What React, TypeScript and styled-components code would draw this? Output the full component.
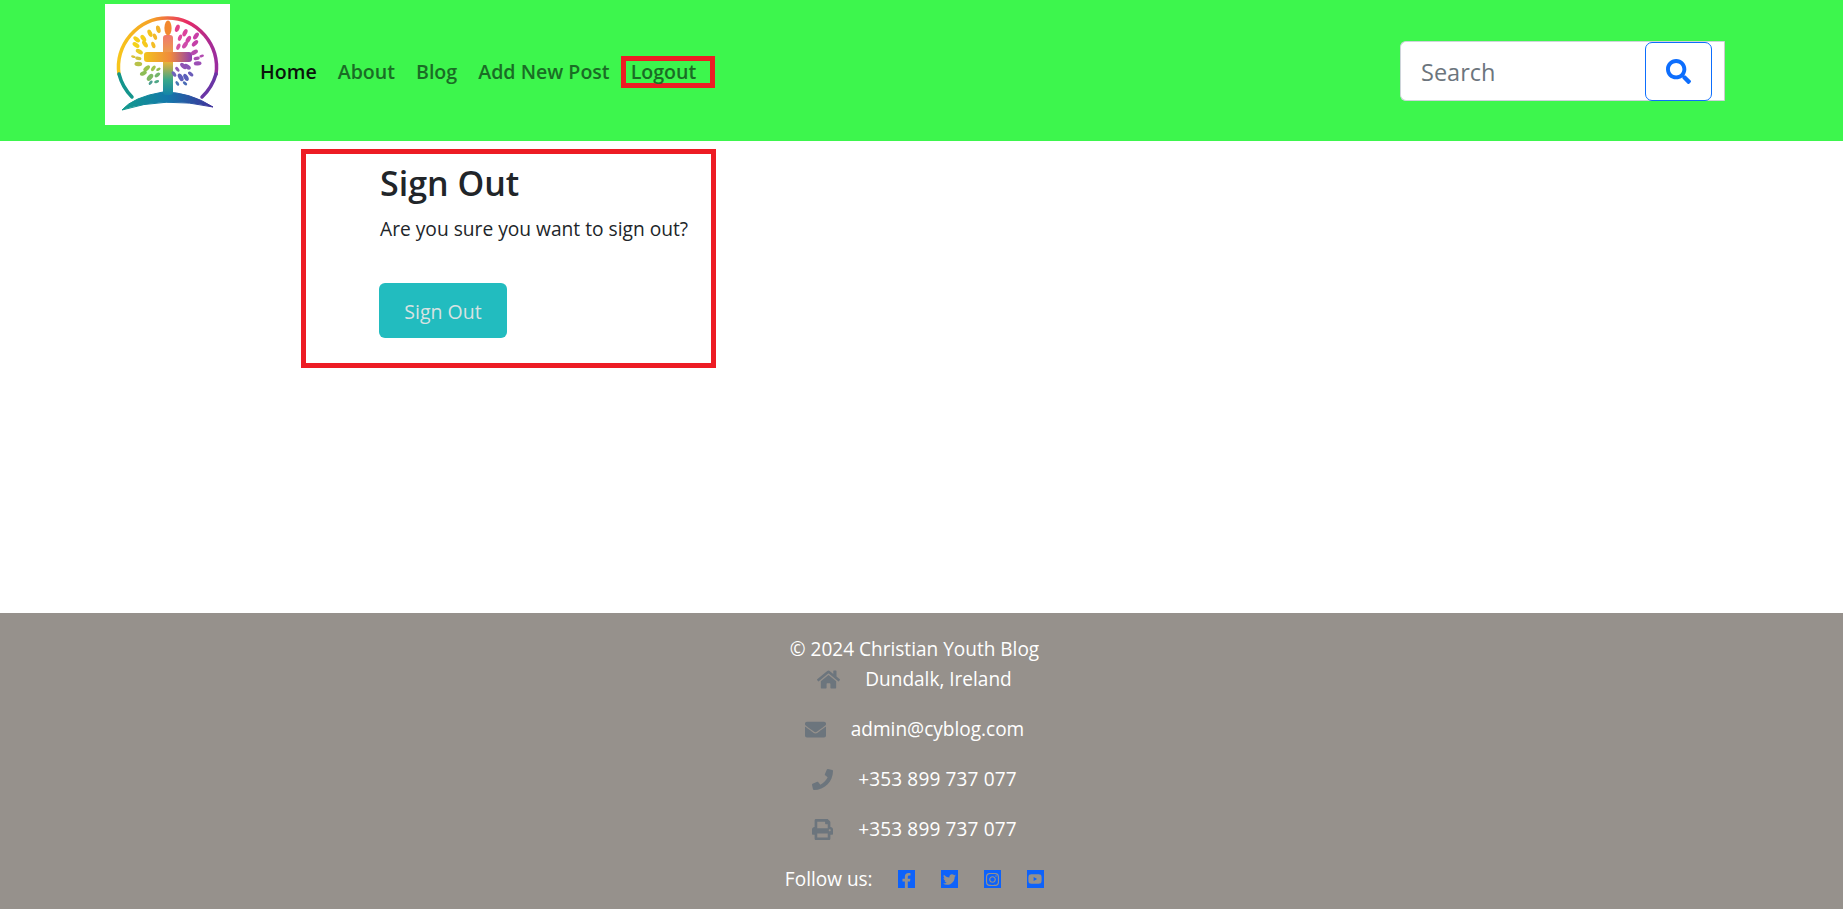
import React from "react";
import styled, { createGlobalStyle } from "styled-components";
import {
  FaHome,
  FaEnvelope,
  FaPhone,
  FaPrint,
  FaSearch,
  FaFacebookF,
  FaTwitter,
  FaInstagram,
  FaYoutube,
} from "react-icons/fa";

const Global = createGlobalStyle`
  html, body { margin: 0; padding: 0; background: #fff; }
  body { font-family: "Open Sans", "Noto Sans", sans-serif; color: #212529; font-size: 19.05px; line-height: 30px; }
  * { box-sizing: border-box; }
`;

const Page = styled.div`
  display: flex;
  flex-direction: column;
  height: 909px;
  overflow: hidden;
`;

const Header = styled.header`
  height: 141px;
  flex: none;
  background: #3df64d;
  display: flex;
  align-items: flex-start;
  padding: 0 118px 0 105px;
`;

const LogoBox = styled.a`
  width: 125px;
  height: 121px;
  background: #fff;
  display: block;
  flex: none;
  margin: 4px 30px 0 0;
`;

const Nav = styled.nav`
  display: flex;
  align-items: center;
  height: 144px;
`;

const NavLink = styled.a<{ $active?: boolean; $boxed?: boolean }>`
  font-size: 19.6px;
  font-weight: 600;
  line-height: 26px;
  color: ${(p) => (p.$active ? "#0a130b" : "#1a6d25")};
  margin-right: ${(p) => (p.$boxed ? "0" : "21px")};
  ${(p) => p.$boxed && "border: 5px solid #ed1c24; padding: 0 14px 0 5px; margin-left: -10px; height: 32px; line-height: 22px;"}
`;

const SearchForm = styled.form`
  margin: 41px 0 0 auto;
  width: 325px;
  height: 60px;
  background: #fff;
  border: 1px solid #ced4da;
  border-right: 1px solid #ccc;
  border-radius: 6px 0 0 6px;
  display: flex;
  align-items: center;
  padding-left: 20px;
`;

const SearchText = styled.span`
  color: #6c757d;
  font-size: 23.5px;
  flex: 1;
  padding-top: 2px;
`;

const SearchButton = styled.button`
  width: 67px;
  height: 59px;
  margin-right: 12px;
  background: #fff;
  border: 1px solid #0d6efd;
  border-radius: 7px;
  display: flex;
  align-items: center;
  justify-content: center;
  color: #0d6efd;
  font-size: 25px;
  padding: 0;
`;

const Main = styled.main`
  flex: 1;
  padding: 8px 0 0 301px;
`;

const NoticeBox = styled.section`
  width: 415px;
  height: 219px;
  border: 5px solid #ed1c24;
  padding: 7px 0 0 74px;
`;

const Title = styled.h1`
  margin: 0;
  font-size: 34px;
  line-height: 44px;
  font-weight: 600;
  color: #212529;
`;

const Message = styled.p`
  margin: 9px 0 0;
  white-space: nowrap;
  font-size: 19.2px;
`;

const SignOutButton = styled.button`
  margin: 39px 0 0 -1px;
  width: 128px;
  height: 55px;
  background: #22bcbf;
  border: none;
  border-radius: 6px;
  color: #d8e2e2;
  font: inherit;
  font-size: 19.5px;
  padding: 2px 0 0;
`;

const Footer = styled.footer`
  height: 296px;
  flex: none;
  background: #96918c;
  color: #fff;
  padding: 21px 14px 0 0;
  display: flex;
  flex-direction: column;
  align-items: center;
  text-align: center;
`;

const Copy = styled.div``;

const ContactRow = styled.div`
  display: flex;
  align-items: center;
  justify-content: center;
  gap: 25px;
  height: 30px;
  margin-bottom: 20px;
`;

const ContactText = styled.span<{ $numeric?: boolean }>`
  letter-spacing: ${(p) => (p.$numeric ? "0.15px" : "0")};
`;

const ContactIcon = styled.span<{ $wide?: boolean }>`
  color: #6c757d;
  display: flex;
  justify-content: center;
  width: ${(p) => (p.$wide ? "23px" : "21px")};
  svg {
    width: ${(p) => (p.$wide ? "23px" : "21px")};
    height: 21px;
  }
`;

const FollowRow = styled.div`
  display: flex;
  align-items: center;
  height: 30px;
  gap: 25px;
`;

const SocialList = styled.div`
  display: flex;
  gap: 25.5px;
`;

const SocialSquare = styled.a<{ $bottom?: boolean; $size: number }>`
  width: 17.5px;
  height: 17.5px;
  background: #0d62fb;
  color: #96918c;
  display: flex;
  justify-content: center;
  align-items: ${(p) => (p.$bottom ? "flex-end" : "center")};
  font-size: ${(p) => p.$size}px;
`;

const LEAVES: [number, number, number, number, string][] = [
  [175, 88, 3, -15, "#f1b32a"], [150, 100, 3, -25, "#f4c21f"], [165, 110, 2.6, -20, "#f2b92b"],
  [130, 115, 3, -35, "#f5cf1c"], [110, 118, 3, -50, "#f5cf1c"], [108, 135, 3, -55, "#f4d21b"],
  [135, 132, 3, -35, "#f6c91e"], [160, 135, 2.6, -20, "#f3bd26"], [118, 155, 3, -60, "#e8cc2a"],
  [100, 170, 1.8, -75, "#d9c23c"], [115, 175, 2.4, -80, "#cfc33f"], [115, 192, 3, -85, "#b8c148"],
  [232, 85, 3, 20, "#e4408a"], [255, 98, 3, 25, "#dc3f9c"], [240, 113, 2.6, 20, "#e04a9e"],
  [288, 108, 3, 35, "#c93ea6"], [265, 118, 3, 30, "#d242a6"], [285, 130, 3, 45, "#c43fa8"],
  [255, 135, 3, 35, "#cf4bab"], [235, 140, 2.6, 20, "#d651a6"], [283, 157, 3, 60, "#b64aad"],
  [305, 168, 1.8, 75, "#b24bb0"], [290, 175, 2.4, 80, "#a94cb2"], [293, 190, 3, 85, "#9c4fb5"],
  [140, 205, 3, 50, "#9cc24d"], [160, 205, 2.4, 35, "#a3c44e"], [175, 208, 1.8, 60, "#94be56"],
  [130, 220, 2.8, 65, "#8dbd55"], [150, 232, 3.2, 40, "#7fb862"], [172, 225, 2.4, 55, "#74b46c"],
  [170, 245, 2, 70, "#4fa886"], [152, 248, 2, 40, "#4d9e93"],
  [250, 198, 3, -45, "#8f53b5"], [232, 208, 2.2, -40, "#8f5ab8"], [262, 200, 3, -55, "#8a55b7"],
  [242, 232, 3.2, -30, "#5e60bb"], [258, 232, 3, -30, "#5a5fba"], [222, 222, 2.4, -35, "#6e64bb"],
  [272, 222, 2.4, -50, "#6a5cb9"], [232, 250, 2, -35, "#4a77b6"], [255, 250, 2, -50, "#4a6cb6"],
];

const Logo = () => (
  <svg viewBox="0 0 125 121" width="125" height="121" role="img" aria-label="Christian Youth Blog logo">
    <defs>
      <linearGradient id="ring" x1="0" x2="1" y1="0.3" y2="0.3">
        <stop offset="0" stopColor="#f7c51c" />
        <stop offset="0.35" stopColor="#f59f27" />
        <stop offset="0.7" stopColor="#e82a66" />
        <stop offset="1" stopColor="#9a2c9e" />
      </linearGradient>
      <linearGradient id="hill" x1="0" x2="1" y1="0" y2="0">
        <stop offset="0" stopColor="#139a8b" />
        <stop offset="0.5" stopColor="#1378ab" />
        <stop offset="1" stopColor="#40309a" />
      </linearGradient>
      <linearGradient id="stem" x1="0" x2="0" y1="0" y2="1">
        <stop offset="0" stopColor="#f0786e" />
        <stop offset="0.45" stopColor="#e9b23a" />
        <stop offset="0.75" stopColor="#3aa78a" />
        <stop offset="1" stopColor="#1284a8" />
      </linearGradient>
      <linearGradient id="bar" x1="0" x2="1" y1="0" y2="0">
        <stop offset="0" stopColor="#f2c31e" />
        <stop offset="0.55" stopColor="#f08a3c" />
        <stop offset="1" stopColor="#8f3fb0" />
      </linearGradient>
    </defs>
    <path d="M14 71 A 49 50 0 1 1 111 71" fill="none" stroke="url(#ring)" strokeWidth="3.5" />
    <path d="M14 70 A 49 50 0 0 0 27 93" fill="none" stroke="#14958c" strokeWidth="3.5" strokeLinecap="round" />
    <path d="M111 70 A 49 50 0 0 1 97 93" fill="none" stroke="#6a35a5" strokeWidth="3.5" strokeLinecap="round" />
    <path d="M17 106 Q 28 93 58 88 Q 85 88 108 103 Q 60 92 17 106 Z" fill="url(#hill)" stroke="url(#hill)" strokeWidth="1" strokeLinejoin="round" />
    <rect x="58" y="31" width="10" height="60" rx="3" fill="url(#stem)" />
    <rect x="39" y="48" width="48" height="10" rx="3" fill="url(#bar)" />
    <ellipse cx="63" cy="24" rx="3.6" ry="7.5" fill="#f2882f" />
    {LEAVES.map(([x, y, r, a, c], i) => {
      const cx = (x - 15) / 3;
      const cy = (y - 12) / 3;
      return <ellipse key={i} cx={cx} cy={cy} rx={r * 0.72} ry={r * 1.3} fill={c} transform={`rotate(${a} ${cx} ${cy})`} />;
    })}
  </svg>
);

export default function App() {
  return (
    <>
      <Global />
      <Page>
        <Header>
          <LogoBox>
            <Logo />
          </LogoBox>
          <Nav>
            <NavLink $active>Home</NavLink>
            <NavLink>About</NavLink>
            <NavLink>Blog</NavLink>
            <NavLink>Add New Post</NavLink>
            <NavLink $boxed>Logout</NavLink>
          </Nav>
          <SearchForm>
            <SearchText>Search</SearchText>
            <SearchButton type="button" aria-label="Search">
              <FaSearch />
            </SearchButton>
          </SearchForm>
        </Header>
        <Main>
          <NoticeBox>
            <Title>Sign Out</Title>
            <Message>Are you sure you want to sign out?</Message>
            <SignOutButton type="button">Sign Out</SignOutButton>
          </NoticeBox>
        </Main>
        <Footer>
          <Copy>© 2024 Christian Youth Blog</Copy>
          <ContactRow>
            <ContactIcon $wide><FaHome /></ContactIcon>
            <ContactText>Dundalk, Ireland</ContactText>
          </ContactRow>
          <ContactRow>
            <ContactIcon><FaEnvelope /></ContactIcon>
            <ContactText>admin@cyblog.com</ContactText>
          </ContactRow>
          <ContactRow>
            <ContactIcon><FaPhone /></ContactIcon>
            <ContactText $numeric>+353 899 737 077</ContactText>
          </ContactRow>
          <ContactRow>
            <ContactIcon><FaPrint /></ContactIcon>
            <ContactText $numeric>+353 899 737 077</ContactText>
          </ContactRow>
          <FollowRow>
            <span>Follow us:</span>
            <SocialList>
              <SocialSquare $bottom $size={15}><FaFacebookF /></SocialSquare>
              <SocialSquare $size={13}><FaTwitter /></SocialSquare>
              <SocialSquare $size={15}><FaInstagram /></SocialSquare>
              <SocialSquare $size={14}><FaYoutube /></SocialSquare>
            </SocialList>
          </FollowRow>
        </Footer>
      </Page>
    </>
  );
}
